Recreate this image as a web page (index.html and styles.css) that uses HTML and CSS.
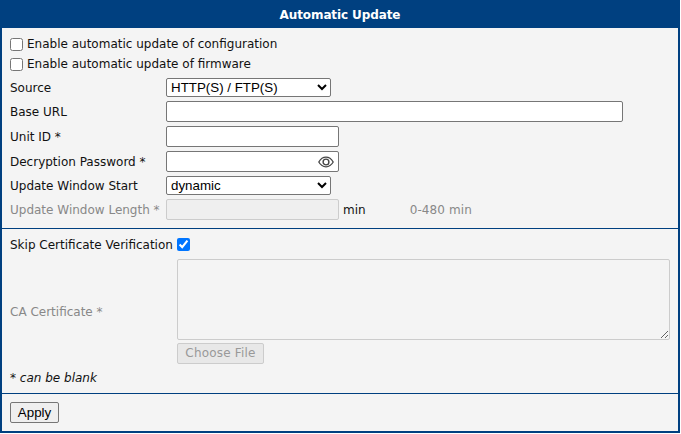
FILE: index.html
```html
<!DOCTYPE html>
<html lang="en">
<head>
<meta charset="utf-8">
<title>Automatic Update</title>
<link rel="stylesheet" href="styles.css">
</head>
<body>
<form class="panel">
  <h1 class="title">Automatic Update</h1>
  <section class="section section-main">
    <label class="check"><input type="checkbox"><span>Enable automatic update of configuration</span></label>
    <label class="check"><input type="checkbox"><span>Enable automatic update of firmware</span></label>
    <div class="rows">
      <div class="row row-select">
        <label>Source</label>
        <select class="select"><option>HTTP(S) / FTP(S)</option></select>
      </div>
      <div class="row">
        <label>Base URL</label>
        <input class="field field-wide" type="text">
      </div>
      <div class="row">
        <label>Unit ID *</label>
        <input class="field" type="text">
      </div>
      <div class="row">
        <label>Decryption Password *</label>
        <div class="password">
          <input class="field" type="password">
          <svg class="eye" viewBox="0 0 16 12" width="16" height="12" aria-hidden="true">
            <path d="M.8 6C2.600 2.900 5 1.200 8 1.200S13.400 2.900 15.200 6C13.400 9.100 11 10.800 8 10.800S2.600 9.100.8 6Z" fill="none" stroke="#444" stroke-width="1.300"/>
            <circle cx="8" cy="6" r="2.900" fill="none" stroke="#444" stroke-width="1.400"/>
          </svg>
        </div>
      </div>
      <div class="row row-select">
        <label>Update Window Start</label>
        <select class="select"><option>dynamic</option></select>
      </div>
      <div class="row muted">
        <label>Update Window Length *</label>
        <input class="field" type="text" disabled>
        <span class="unit">min</span>
        <span class="hint">0-480 min</span>
      </div>
    </div>
  </section>
  <section class="section section-cert">
    <label class="skip"><span>Skip Certificate Verification</span><input type="checkbox" checked></label>
    <div class="cert">
      <label class="cert-label">CA Certificate *</label>
      <textarea class="cert-text" disabled></textarea>
    </div>
    <button class="choose" type="button" disabled>Choose File</button>
    <p class="note">* <em>can be blank</em></p>
  </section>
  <section class="section-actions">
    <button class="apply" type="button">Apply</button>
  </section>
</form>
</body>
</html>
```
FILE: styles.css
```css
* { box-sizing: border-box; }
html, body { margin: 0; padding: 0; background: #fff; }
body { font: 12px/15px "DejaVu Sans", Verdana, sans-serif; color: #111; }
.panel { width: 680px; height: 433px; border: 2px solid #004080; border-top: 0; background: #f4f4f4; display: flex; flex-direction: column; }
.title { margin: 0; height: 28px; background: #004080; color: #fff; font-size: 12px; font-weight: 700; letter-spacing: -.1px; line-height: 30px; text-align: center; }
.section { border-bottom: 1px solid #004080; padding: 0 8px; }
.section-main { height: 201px; padding-top: 6px; }
.section-cert { height: 165px; padding-top: 7px; }
.section-actions { padding: 8px 8px; }
.check { display: flex; align-items: center; gap: 4px; height: 20px; }
.check input, .skip input { width: 13px; height: 13px; margin: 0; flex: none; }
.rows { display: flex; flex-direction: column; gap: 4px; margin-top: 4px; }
.row { display: flex; align-items: center; height: 21px; }
.row-select { height: 19px; }
.row label { width: 156px; flex: none; padding-top: 2px; white-space: nowrap; }
.select { width: 165px; height: 19px; padding: 0; font: 13.33px "Liberation Sans", Arial, sans-serif; color: #000; background: #fff; border: 1px solid #767676; border-radius: 2px; }
.field { width: 173px; height: 21px; padding: 1px 2px; background: #fff; border: 1px solid #767676; border-radius: 2px; font: 13.33px "Liberation Sans", Arial, sans-serif; display: block; }
.field-wide { width: 457px; }
.password { position: relative; width: 173px; }
.eye { position: absolute; right: 5px; top: 5px; }
.muted label, .muted .hint, .cert-label { color: #888; }
.muted .field { background: #efefef; border-color: #ccc; }
.unit { margin-left: 4px; padding-top: 2px; }
.hint { margin-left: 44px; padding-top: 2px; letter-spacing: .1px; }
.skip { display: flex; align-items: center; gap: 4px; height: 16px; }
.skip span { padding-top: 2px; }
.cert { display: flex; align-items: flex-start; margin-top: 7px; }
.cert-label { width: 167px; flex: none; padding-top: 46px; }
.cert-text { width: 493px; height: 81px; margin: 0; padding: 2px; background: #f4f4f4; border: 1px solid #ccc; border-radius: 2px; display: block; }
.choose { display: block; width: 87px; height: 21px; margin: 3px 0 0 167px; padding: 0; background: #e8e8e8; color: #999; border: 1px solid #ccc; border-radius: 2px; font: inherit; letter-spacing: .2px; }
.note { margin: 7px 0 0; }
.apply { display: block; width: 49px; height: 21px; padding: 0; background: #efefef; color: #000; border: 1px solid #767676; border-radius: 2px; font: 13.33px "Liberation Sans", Arial, sans-serif; }
```
